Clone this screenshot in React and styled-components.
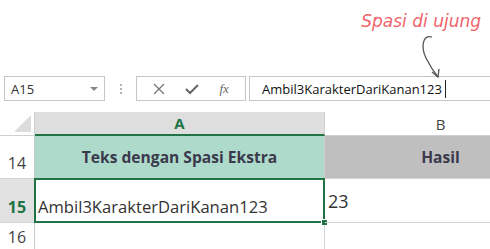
import React from "react";
import styled, { createGlobalStyle } from "styled-components";

const Global = createGlobalStyle`
  html, body { margin: 0; padding: 0; background: #fff; }
  body { font-family: "Open Sans", "Liberation Sans", sans-serif; color: #333; }
`;

const Page = styled.div`
  width: 490px;
  height: 249px;
  overflow: hidden;
  background: #fff;
`;

const Top = styled.div`
  position: relative;
  height: 76px;
  display: flex;
  justify-content: flex-end;
  align-items: flex-start;
  padding: 11px 9px 0 0;
  box-sizing: border-box;
`;

const Note = styled.div`
  font-family: "DejaVu Sans", sans-serif;
  font-style: italic;
  font-size: 17px;
  letter-spacing: 0;
  color: #f0636b;
`;

const Arrow = styled.svg`
  position: absolute;
  left: 415px;
  top: 34px;
  width: 34px;
  height: 46px;
  overflow: visible;
`;

const Bar = styled.div`
  display: flex;
  align-items: stretch;
  height: 25px;
  padding-left: 4px;
`;

const NameBox = styled.div`
  width: 101px;
  box-sizing: border-box;
  border: 1px solid #c6c6c6;
  display: flex;
  align-items: center;
  justify-content: space-between;
  padding: 0 6px 0 6px;
  font-size: 13px;
  color: #333;
`;

const Caret = styled.span`
  width: 0;
  height: 0;
  border-left: 4px solid transparent;
  border-right: 4px solid transparent;
  border-top: 4px solid #888;
`;

const Grip = styled.div`
  width: 31px;
  display: flex;
  flex-direction: column;
  align-items: center;
  justify-content: center;
  gap: 2px;
  span {
    width: 2px;
    height: 2px;
    background: #b4b4b4;
  }
`;

const Buttons = styled.div`
  width: 110px;
  box-sizing: border-box;
  border: 1px solid #c6c6c6;
  display: flex;
  align-items: center;
  justify-content: space-around;
  padding: 0 6px;
  color: #777;
`;

const Fx = styled.span`
  font-family: "Liberation Serif", serif;
  font-style: italic;
  font-size: 13px;
  color: #666;
`;

const Input = styled.div`
  flex: 1;
  margin-left: 3px;
  border: 1px solid #c6c6c6;
  border-right: none;
  display: flex;
  align-items: center;
  padding-left: 12px;
  font-size: 13px;
  color: #111;
`;

const Cursor = styled.span`
  display: inline-block;
  width: 1px;
  height: 18px;
  margin-left: 3px;
  background: #222;
`;

const Sheet = styled.div`
  margin-top: 11px;
  display: grid;
  grid-template-columns: 35px 290px 232px;
  grid-template-rows: 24px 43px 44px 30px;
`;

const Corner = styled.div`
  position: relative;
  border-right: 1px solid #d0d0d0;
  border-bottom: 1px solid #d0d0d0;
  &::after {
    content: "";
    position: absolute;
    right: 3px;
    bottom: 3px;
    border-left: 17px solid transparent;
    border-bottom: 17px solid #dcdcdc;
  }
`;

const ColHead = styled.div`
  display: flex;
  align-items: center;
  justify-content: center;
  font-size: 15px;
  background: ${(p) => (p.$active ? "#dedede" : "#fff")};
  color: ${(p) => (p.$active ? "#217346" : "#444")};
  font-weight: ${(p) => (p.$active ? 700 : 400)};
  border-right: 1px solid #d0d0d0;
  border-bottom: ${(p) => (p.$active ? "2px solid #217346" : "1px solid #d0d0d0")};
`;

const RowHead = styled.div`
  display: flex;
  align-items: flex-end;
  justify-content: center;
  padding-bottom: 4px;
  box-sizing: border-box;
  font-size: 16px;
  background: ${(p) => (p.$active ? "#e1e1e1" : "#fff")};
  color: ${(p) => (p.$active ? "#217346" : "#444")};
  font-weight: ${(p) => (p.$active ? 700 : 400)};
  border-right: 1px solid #c8c8c8;
  border-bottom: 1px solid #d4d4d4;
`;

const Head = styled.div`
  display: flex;
  align-items: center;
  justify-content: center;
  font-size: 15.6px;
  font-weight: 700;
  color: #3a3a4c;
  background: ${(p) => p.$bg};
  border-right: 1px solid #d0d0d0;
  border-bottom: 1px solid #d4d4d4;
`;

const Cell = styled.div`
  position: relative;
  display: flex;
  align-items: ${(p) => (p.$top ? "center" : "flex-end")};
  padding: 0 0 ${(p) => (p.$top ? "0" : "4px")} 3px;
  box-sizing: border-box;
  font-size: ${(p) => p.$size || "16.6px"};
  color: #333;
  white-space: nowrap;
  border-right: 1px solid #d4d4d4;
  border-bottom: 1px solid #d4d4d4;
`;

const Selected = styled(Cell)`
  &::before {
    content: "";
    position: absolute;
    left: -1px;
    top: -1px;
    right: -1px;
    bottom: -1px;
    border: 2px solid #217346;
  }
`;

const Handle = styled.span`
  position: absolute;
  right: -3px;
  bottom: -3px;
  width: 5px;
  height: 5px;
  background: #217346;
  border: 1px solid #fff;
  border-right: none;
  border-bottom: none;
`;

const Empty = styled.div`
  border-right: 1px solid #d4d4d4;
  border-bottom: 1px solid #d4d4d4;
`;

export default function App() {
  return (
    <Page>
      <Global />
      <Top>
        <Note>Spasi di ujung</Note>
        <Arrow viewBox="0 0 34 46">
          <path
            d="M17 3 C7 0, 6 14, 11 24 C15 32, 19 38, 23 43"
            fill="none"
            stroke="#555"
            strokeWidth="1.3"
          />
          <path d="M17 38 L23 43 L24 35" fill="none" stroke="#555" strokeWidth="1.3" />
        </Arrow>
      </Top>
      <Bar>
        <NameBox>
          A15
          <Caret />
        </NameBox>
        <Grip>
          <span />
          <span />
          <span />
        </Grip>
        <Buttons>
          <svg width="12" height="12" viewBox="0 0 12 12">
            <path d="M1 1 L11 11 M11 1 L1 11" stroke="#777" strokeWidth="1.3" />
          </svg>
          <svg width="14" height="12" viewBox="0 0 14 12">
            <path d="M1 6 L5 10 L13 2" fill="none" stroke="#666" strokeWidth="2" />
          </svg>
          <Fx>fx</Fx>
        </Buttons>
        <Input>
          Ambil3KarakterDariKanan123
          <Cursor />
        </Input>
      </Bar>
      <Sheet>
        <Corner />
        <ColHead $active>A</ColHead>
        <ColHead>B</ColHead>

        <RowHead>14</RowHead>
        <Head $bg="#aedacb">Teks dengan Spasi Ekstra</Head>
        <Head $bg="#bfbfbf">Hasil</Head>

        <RowHead $active>15</RowHead>
        <Selected>
          Ambil3KarakterDariKanan123
          <Handle />
        </Selected>
        <Cell $top $size="18px">23</Cell>

        <RowHead>16</RowHead>
        <Empty />
        <Empty />
      </Sheet>
    </Page>
  );
}
